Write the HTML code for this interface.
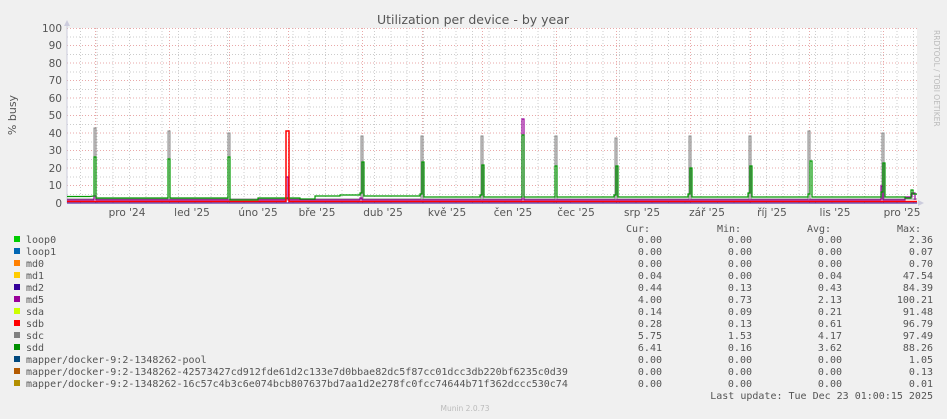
<!DOCTYPE html>
<html><head><meta charset="utf-8"><style>
html,body{margin:0;padding:0;background:#f0f0f0;}
svg{display:block}
text{font-family:"DejaVu Sans","Liberation Sans",sans-serif;}
.m text, text.m{font-family:"DejaVu Sans Mono","Liberation Mono",monospace;font-size:10px;fill:#555}
</style></head><body>
<svg width="947" height="419" viewBox="0 0 947 419" xmlns="http://www.w3.org/2000/svg">
<rect width="947" height="419" fill="#f0f0f0"/>
<text x="473" y="24" text-anchor="middle" font-size="12.5" fill="#555">Utilization per device - by year</text>
<text transform="translate(16,115) rotate(-90)" text-anchor="middle" font-size="11" fill="#555">% busy</text>
<text transform="translate(934,30) rotate(90)" font-size="7.5" fill="#bbb">RRDTOOL / TOBI OETIKER</text>
<rect x="67" y="28" width="850" height="175" fill="#fff"/>
<g stroke="#ccc" stroke-width="1" stroke-dasharray="1,2">
<path d="M67 194.5H917M67 177H917M67 159.5H917M67 142H917M67 124.5H917M67 107H917M67 89.5H917M67 72H917M67 54.5H917M67 37H917"/>
<path d="M80.5 28V203M97 28V203M113 28V203M129.5 28V203M146 28V203M162 28V203M178.5 28V203M195 28V203M211 28V203M227.5 28V203M244 28V203M260 28V203M276.5 28V203M293 28V203M309 28V203M325.5 28V203M342 28V203M358 28V203M374.5 28V203M391 28V203M407 28V203M423.5 28V203M440 28V203M456 28V203M472.5 28V203M489 28V203M505 28V203M521.5 28V203M538 28V203M554 28V203M570.5 28V203M587 28V203M603 28V203M619.5 28V203M636 28V203M652 28V203M668.5 28V203M685 28V203M701 28V203M717.5 28V203M734 28V203M750 28V203M766.5 28V203M783 28V203M799 28V203M815.5 28V203M832 28V203M848 28V203M864.5 28V203M881 28V203M897 28V203M913.5 28V203"/>
</g>
<g stroke="#e9a8a8" stroke-width="1" stroke-dasharray="1,2">
<path d="M67 185.5H917M67 168H917M67 150.5H917M67 133H917M67 115.5H917M67 98H917M67 80.5H917M67 63H917M67 45.5H917M67 28.5H917"/>
<path d="M95.5 28V203M169.5 28V203M229.5 28V203M288.5 28V203M362.5 28V203M422.5 28V203M482.5 28V203M556.5 28V203M616.5 28V203M690.5 28V203M750.5 28V203M809.5 28V203M883.5 28V203"/>
</g>
<path d="M67 24V203M67 203H920" stroke="#ccd" stroke-width="1"/>
<path d="M64 26L67 20L70 26Z M918 200L924 203L918 206Z" fill="#ccd"/>
<g font-size="10.5" fill="#555" text-anchor="end">
<text x="62" y="207">0</text><text x="62" y="189">10</text><text x="62" y="172">20</text><text x="62" y="154">30</text><text x="62" y="137">40</text><text x="62" y="119">50</text><text x="62" y="102">60</text><text x="62" y="84">70</text><text x="62" y="67">80</text><text x="62" y="49">90</text><text x="62" y="32">100</text>
</g>
<g font-size="10.5" fill="#555" text-anchor="middle">
<text x="127" y="216">pro '24</text><text x="192" y="216">led '25</text><text x="258" y="216">úno '25</text><text x="317" y="216">bře '25</text><text x="383" y="216">dub '25</text><text x="447" y="216">kvě '25</text><text x="513" y="216">čen '25</text><text x="576" y="216">čec '25</text><text x="642" y="216">srp '25</text><text x="707" y="216">zář '25</text><text x="772" y="216">říj '25</text><text x="835" y="216">lis '25</text><text x="902" y="216">pro '25</text>
</g>
<g fill="#ccc" opacity="0.7">
<rect x="94" y="128" width="2" height="71"/><rect x="168" y="131" width="2" height="68"/><rect x="228" y="133" width="2" height="66"/><rect x="361" y="136" width="2" height="63"/><rect x="421" y="136" width="2" height="63"/><rect x="481" y="136" width="2" height="63"/><rect x="555" y="136" width="2" height="63"/><rect x="615" y="138" width="2" height="61"/><rect x="689" y="136" width="2" height="63"/><rect x="749" y="136" width="2" height="63"/><rect x="808" y="131" width="2" height="68"/><rect x="882" y="133" width="2" height="66"/>
</g>
<g fill="none" stroke="#888" stroke-width="1">
<path d="M67 199H94V128H96V199H168V131H170V199H228V133H230V199H361V136H363V199H421V136H423V199H481V136H483V199H555V136H557V199H615V138H617V199H689V136H691V199H749V136H751V199H808V131H810V199H882V133H884V199H917"/>
</g>
<path d="M67 200H94V196H96V200H286V177H288V200H360V198H362V200H522V119H524V200H881V186H883V200H905V197H912V193H915V200" fill="none" stroke="#990099" stroke-width="1.2"/>
<path d="M67 196.5H90L94 196V157H96V198H168V159H170V198H228V157H230V200H258V198H300V199H315V196H340V195H360V193H362V162H364V196H420V194H422V162H424V197H480V195H482V165H484V197H522V135H524V197H555V166H557V197H614V195H616V166H618V197H688V194H690V168H692V197H748V193H750V166H752V197H808V194H810V161H812V197H881V192H883V163H885V197H905V198H911V190H913V194H917" fill="none" stroke="#009900" stroke-width="1.2"/>
<path d="M67 201.5H286V131H289V201.5H917" fill="none" stroke="#ff0000" stroke-width="1.5"/>
<path d="M67 203H917" stroke="#330099" stroke-width="1"/>
<g class="m">
<text x="626" y="232">Cur:</text><text x="717" y="232">Min:</text><text x="807" y="232">Avg:</text><text x="897" y="232">Max:</text>
</g>
<g>
<rect x="14" y="236" width="6" height="6" fill="#00cc00"/>
<rect x="14" y="248" width="6" height="6" fill="#0066b3"/>
<rect x="14" y="260" width="6" height="6" fill="#ff8000"/>
<rect x="14" y="272" width="6" height="6" fill="#ffcc00"/>
<rect x="14" y="284" width="6" height="6" fill="#330099"/>
<rect x="14" y="296" width="6" height="6" fill="#990099"/>
<rect x="14" y="308" width="6" height="6" fill="#ccff00"/>
<rect x="14" y="320" width="6" height="6" fill="#ff0000"/>
<rect x="14" y="332" width="6" height="6" fill="#808080"/>
<rect x="14" y="344" width="6" height="6" fill="#008f00"/>
<rect x="14" y="356" width="6" height="6" fill="#00487d"/>
<rect x="14" y="368" width="6" height="6" fill="#b35a00"/>
<rect x="14" y="380" width="6" height="6" fill="#b38f00"/>
</g>
<g class="m">
<text x="26" y="243">loop0</text><text x="26" y="255">loop1</text><text x="26" y="267">md0</text><text x="26" y="279">md1</text><text x="26" y="291">md2</text><text x="26" y="303">md5</text><text x="26" y="315">sda</text><text x="26" y="327">sdb</text><text x="26" y="339">sdc</text><text x="26" y="351">sdd</text><text x="26" y="363">mapper/docker-9:2-1348262-pool</text><text x="26" y="375">mapper/docker-9:2-1348262-42573427cd912fde61d2c133e7d0bbae82dc5f87cc01dcc3db220bf6235c0d39</text><text x="26" y="387">mapper/docker-9:2-1348262-16c57c4b3c6e074bcb807637bd7aa1d2e278fc0fcc74644b71f362dccc530c74</text>
</g>
<g class="m" text-anchor="end">
<text x="662" y="243">0.00</text><text x="752" y="243">0.00</text><text x="842" y="243">0.00</text><text x="933" y="243">2.36</text>
<text x="662" y="255">0.00</text><text x="752" y="255">0.00</text><text x="842" y="255">0.00</text><text x="933" y="255">0.07</text>
<text x="662" y="267">0.00</text><text x="752" y="267">0.00</text><text x="842" y="267">0.00</text><text x="933" y="267">0.70</text>
<text x="662" y="279">0.04</text><text x="752" y="279">0.00</text><text x="842" y="279">0.04</text><text x="933" y="279">47.54</text>
<text x="662" y="291">0.44</text><text x="752" y="291">0.13</text><text x="842" y="291">0.43</text><text x="933" y="291">84.39</text>
<text x="662" y="303">4.00</text><text x="752" y="303">0.73</text><text x="842" y="303">2.13</text><text x="933" y="303">100.21</text>
<text x="662" y="315">0.14</text><text x="752" y="315">0.09</text><text x="842" y="315">0.21</text><text x="933" y="315">91.48</text>
<text x="662" y="327">0.28</text><text x="752" y="327">0.13</text><text x="842" y="327">0.61</text><text x="933" y="327">96.79</text>
<text x="662" y="339">5.75</text><text x="752" y="339">1.53</text><text x="842" y="339">4.17</text><text x="933" y="339">97.49</text>
<text x="662" y="351">6.41</text><text x="752" y="351">0.16</text><text x="842" y="351">3.62</text><text x="933" y="351">88.26</text>
<text x="662" y="363">0.00</text><text x="752" y="363">0.00</text><text x="842" y="363">0.00</text><text x="933" y="363">1.05</text>
<text x="662" y="375">0.00</text><text x="752" y="375">0.00</text><text x="842" y="375">0.00</text><text x="933" y="375">0.13</text>
<text x="662" y="387">0.00</text><text x="752" y="387">0.00</text><text x="842" y="387">0.00</text><text x="933" y="387">0.01</text>
<text x="933" y="399">Last update: Tue Dec 23 01:00:15 2025</text>
</g>
<text x="465" y="411" text-anchor="middle" font-size="7.5" fill="#bbb">Munin 2.0.73</text>
</svg>
</body></html>
